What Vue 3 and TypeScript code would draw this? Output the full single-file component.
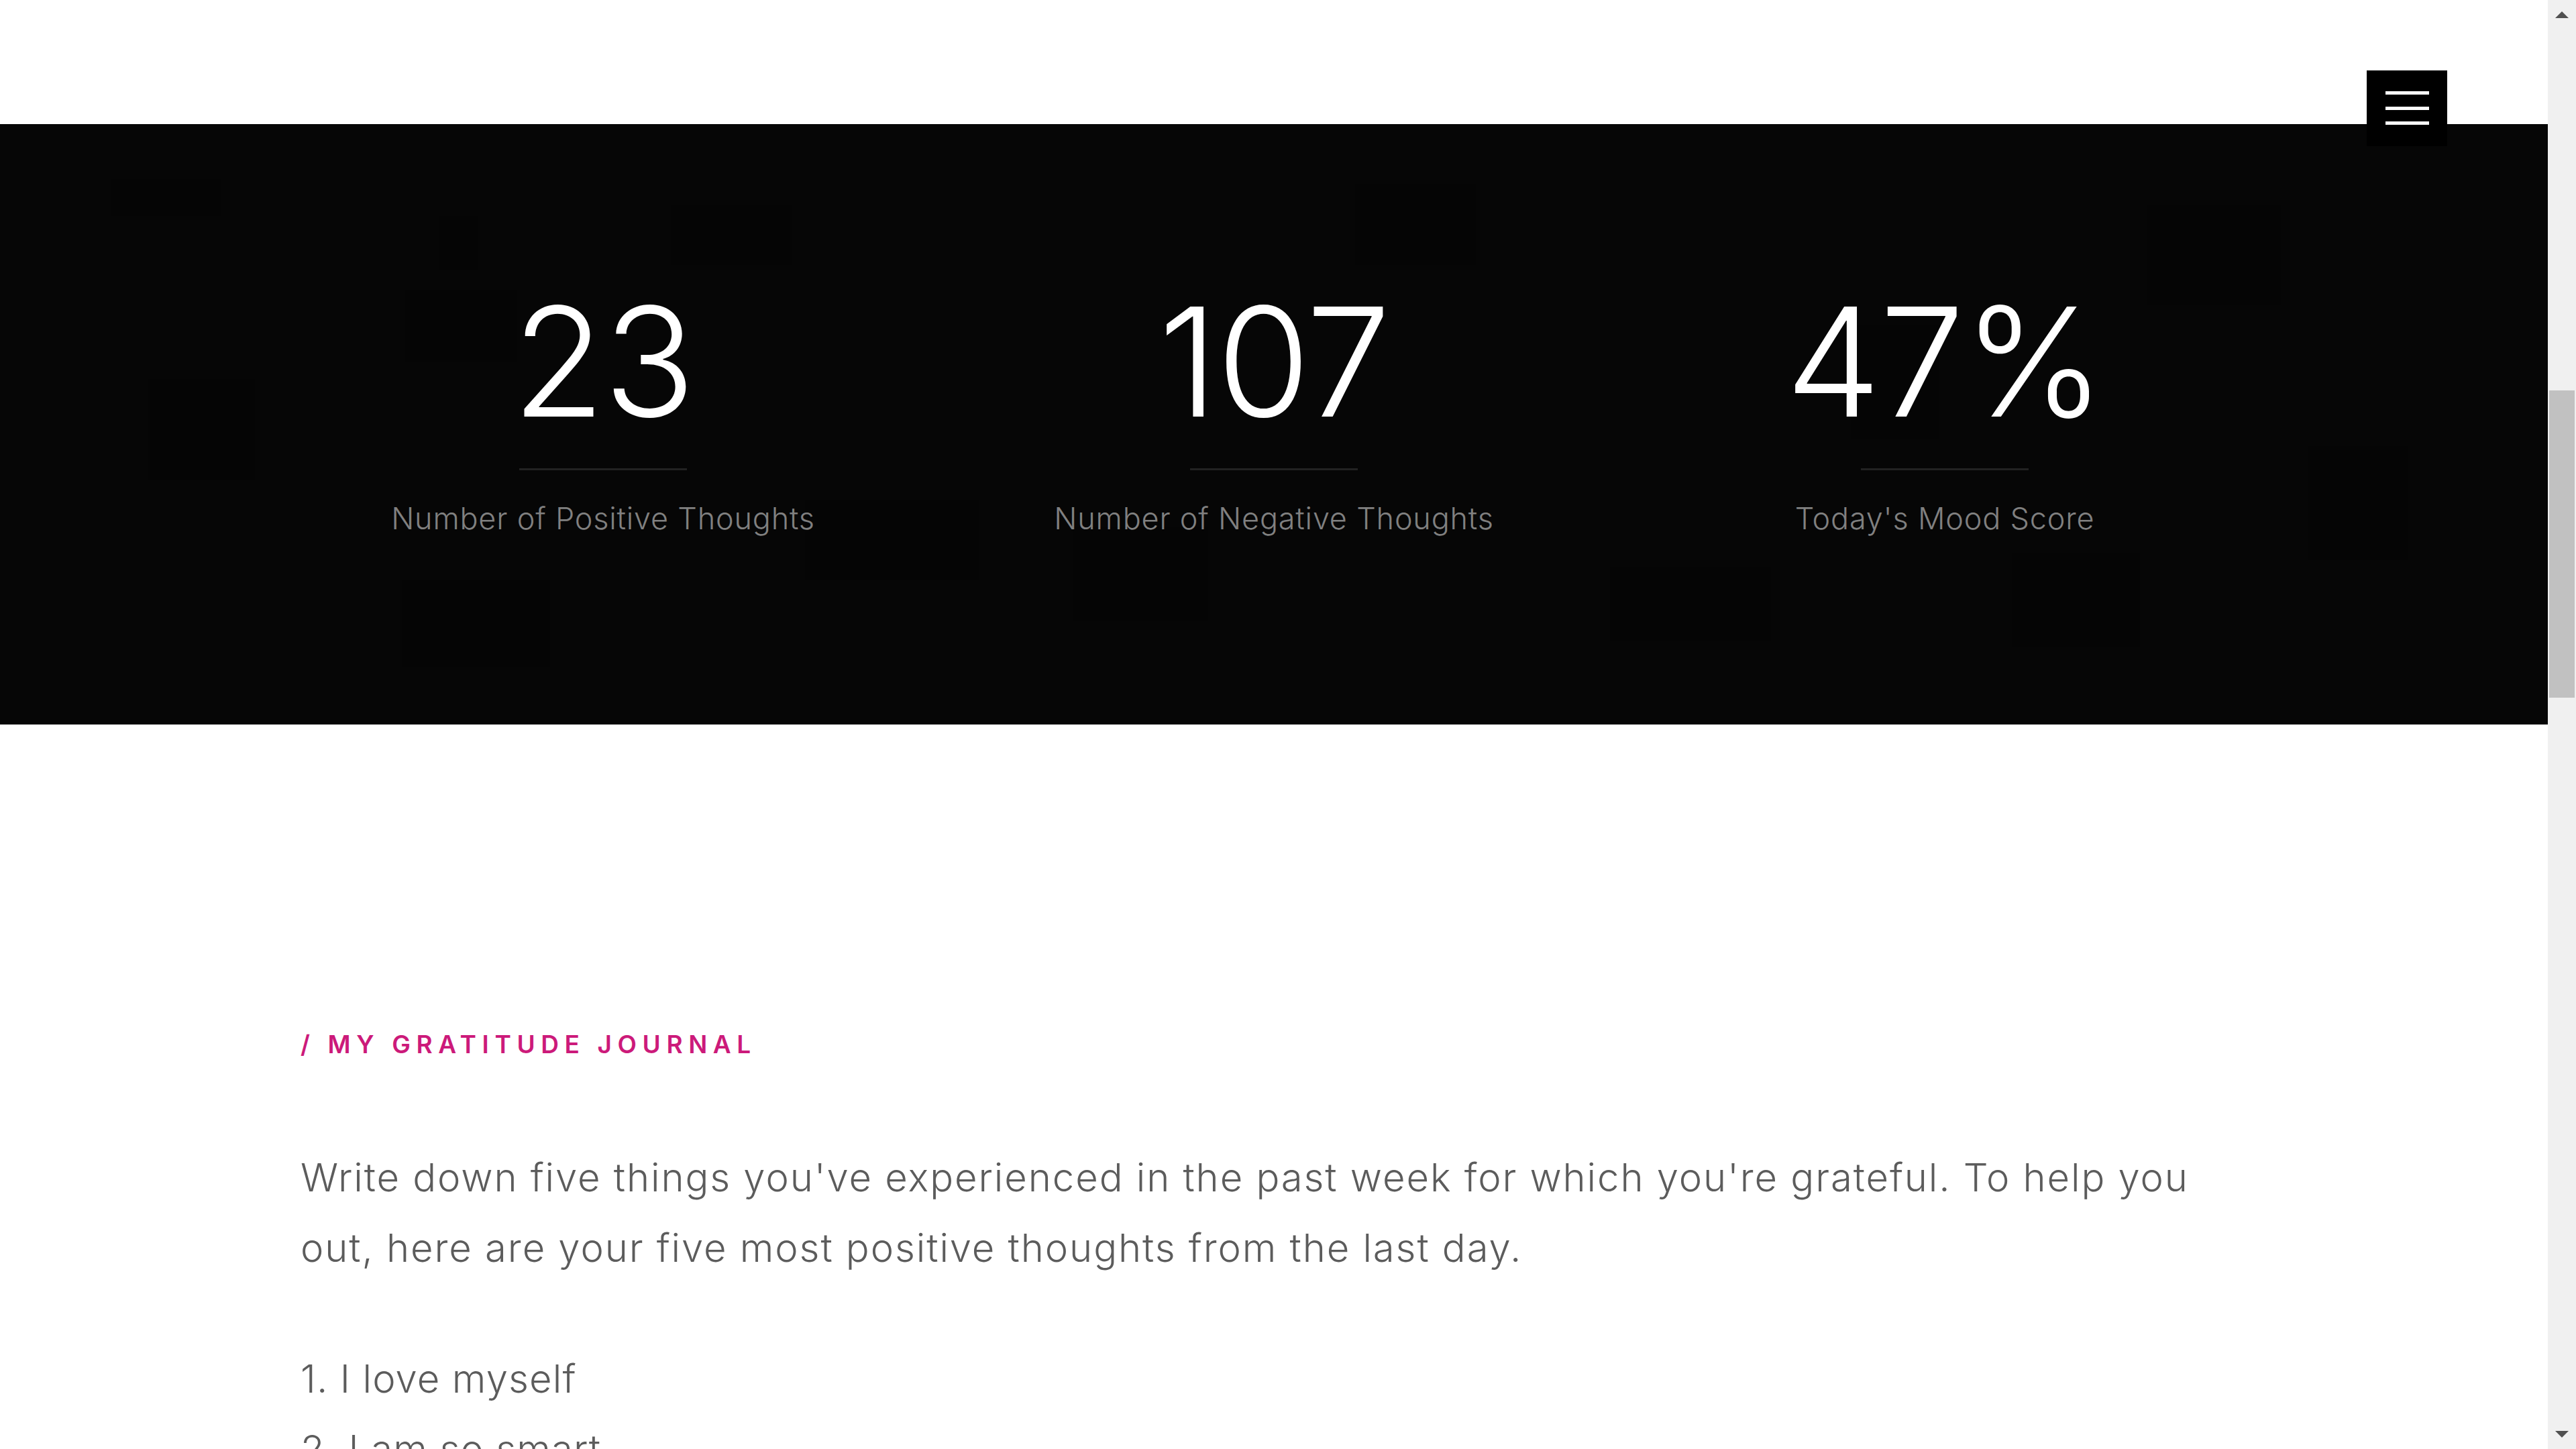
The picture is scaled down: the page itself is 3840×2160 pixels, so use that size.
<template>
  <div class="page">
    <main class="content">
      <button class="menu-btn" type="button" aria-label="Menu">
        <span></span>
        <span></span>
        <span></span>
      </button>

      <section class="stats">
        <svg class="stats-texture" width="3798" height="895" viewBox="0 0 3798 895" aria-hidden="true">
          <rect v-for="(b, i) in blocks" :key="i" :x="b[0]" :y="b[1]" :width="b[2]" :height="b[3]" />
        </svg>
        <div v-for="stat in stats" :key="stat.label" class="stat">
          <div class="stat-value">{{ stat.value }}</div>
          <div class="stat-rule"></div>
          <div class="stat-label">{{ stat.label }}</div>
        </div>
      </section>

      <section class="journal">
        <h2 class="journal-title">/ MY GRATITUDE JOURNAL</h2>
        <p class="journal-intro">
          Write down five things you've experienced in the past week for which you're grateful. To help you<br />
          out, here are your five most positive thoughts from the last day.
        </p>
        <ol class="journal-list">
          <li v-for="(thought, i) in thoughts" :key="thought">{{ i + 1 }}. {{ thought }}</li>
        </ol>
      </section>
    </main>

    <aside class="scrollbar">
      <div class="arrow arrow-up"></div>
      <div class="track"><div class="thumb"></div></div>
      <div class="arrow arrow-down"></div>
    </aside>
  </div>
</template>

<script setup lang="ts">
interface Stat {
  value: string
  label: string
}

const stats: Stat[] = [
  { value: '23', label: 'Number of Positive Thoughts' },
  { value: '107', label: 'Number of Negative Thoughts' },
  { value: '47%', label: "Today's Mood Score" }
]

const thoughts = ['I love myself', 'I am so smart']

// faint darker blocks in the band's background: x, y, w, h
const blocks: number[][] = [
  [166, 82, 164, 55],
  [654, 137, 59, 81],
  [603, 247, 167, 108],
  [220, 380, 160, 150],
  [1000, 120, 180, 90],
  [1200, 560, 260, 120],
  [1600, 600, 200, 140],
  [2020, 90, 180, 120],
  [2400, 660, 240, 110],
  [2760, 300, 130, 170],
  [3200, 120, 200, 150],
  [3440, 480, 150, 170],
  [600, 680, 220, 130],
  [3000, 640, 190, 140]
]
</script>

<style>
html,
body {
  margin: 0;
  overflow: hidden;
  background: #fff;
}
</style>

<style scoped>
.page {
  display: flex;
  width: 3840px;
  height: 2160px;
  overflow: hidden;
  font-family: 'Inter', 'Open Sans', sans-serif;
}

.content {
  position: relative;
  flex: 1;
  min-width: 0;
  padding-top: 185px;
  overflow: hidden;
  background: #fff;
}

.menu-btn {
  position: absolute;
  top: 105px;
  right: 150px;
  z-index: 1;
  width: 120px;
  height: 113px;
  padding: 31px 27px 32px 28px;
  display: flex;
  flex-direction: column;
  justify-content: space-between;
  border: none;
  background: #000;
}

.menu-btn span {
  display: block;
  height: 5px;
  background: #fff;
}

.stats {
  position: relative;
  height: 895px;
  box-sizing: border-box;
  padding-top: 219px;
  display: flex;
  justify-content: center;
  background: #060606;
}

.stats-texture {
  position: absolute;
  top: 0;
  left: 0;
  fill: #050505;
}

.stat {
  position: relative;
  width: 1000px;
  display: flex;
  flex-direction: column;
  align-items: center;
}

.stat-value {
  font-size: 226px;
  font-weight: 350;
  line-height: 270px;
  letter-spacing: -2px;
  color: #fff;
}

.stat-rule {
  width: 250px;
  height: 3px;
  margin-top: 24px;
  background: #222;
}

.stat-label {
  margin-top: 42px;
  font-size: 45px;
  font-weight: 300;
  line-height: 60px;
  letter-spacing: 0.8px;
  color: #808080;
}

.journal {
  width: 3000px;
  margin: 0 auto;
  padding: 457px 50px 0 49px;
  box-sizing: border-box;
  color: #5c5c5c;
}

.journal-title {
  margin: 0;
  font-size: 37px;
  font-weight: 600;
  line-height: 40px;
  letter-spacing: 8.6px;
  color: #cc1a7a;
}

.journal-intro {
  margin: 126px 0 0;
  font-size: 58px;
  font-weight: 300;
  line-height: 105px;
  letter-spacing: 1.9px;
}

.journal-list {
  margin: 90px 0 0;
  padding: 0;
  list-style: none;
  font-size: 58px;
  font-weight: 300;
  line-height: 105px;
  letter-spacing: 1.1px;
}

.scrollbar {
  width: 42px;
  flex: none;
  display: flex;
  flex-direction: column;
  background: #f0f0f0;
}

.arrow {
  flex: none;
  width: 0;
  height: 0;
  margin: 17px auto;
  border-left: 10px solid transparent;
  border-right: 10px solid transparent;
}

.arrow-up {
  border-bottom: 10px solid #505050;
}

.arrow-down {
  border-top: 10px solid #505050;
}

.track {
  flex: 1;
  padding-top: 538px;
}

.thumb {
  height: 458px;
  margin: 0 2px;
  background: #c1c1c1;
}
</style>
